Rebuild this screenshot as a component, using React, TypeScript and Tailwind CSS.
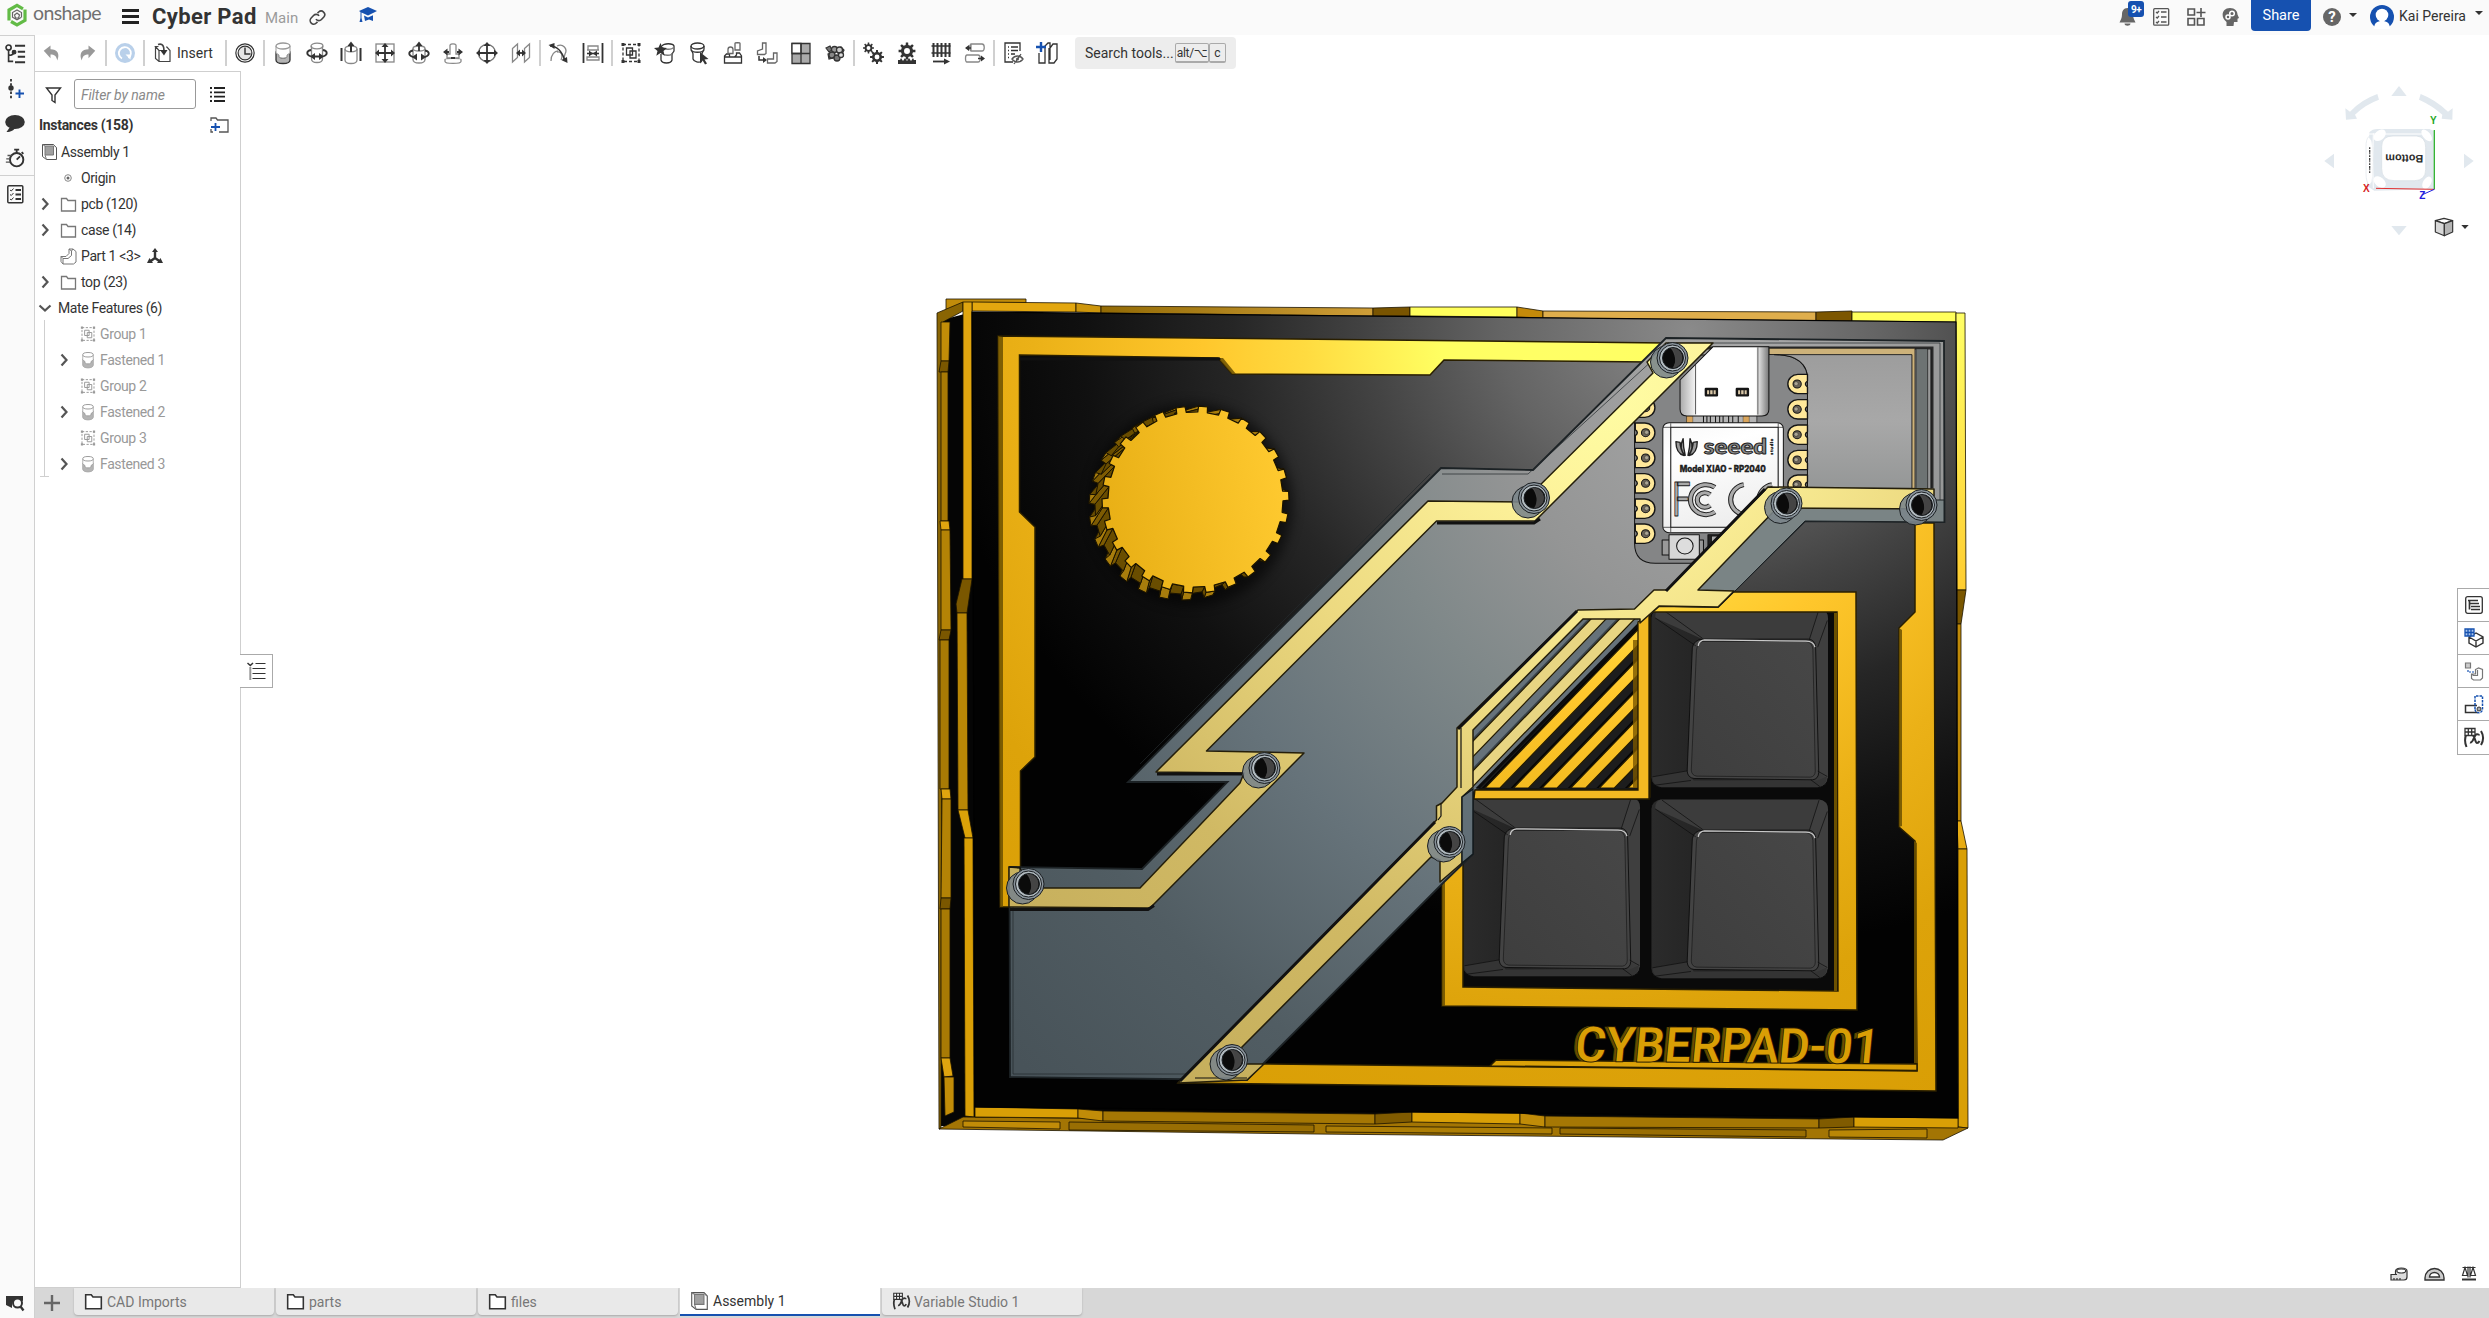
import React from "react";

type Kids = { children?: React.ReactNode };
const DARK = "#333333";
const BLUE = "#1651b0";

function Ico({ children, size = 24, className = "", color = DARK }: Kids & { size?: number; className?: string; color?: string }) {
  return (
    <svg width={size} height={size} viewBox="0 0 24 24" fill="none" stroke={color} strokeWidth={1.3} className={"shrink-0 " + className}>
      {children}
    </svg>
  );
}

/* ---------- toolbar icons ---------- */
const Arrow = ({ d }: { d: string }) => <path d={d} fill={DARK} stroke="none" />;

const FastenedIcon = ({ color = DARK }: { color?: string }) => (
  <Ico color={color}>
    <path d="M5 11v8c0 2 3 3.500 7 3.500s7-1.500 7-3.500v-8l-3.500 1v4c-1 1.500-6 1.500-7 0v-4z" fill="#b4b4b4" />
    <path d="M5 5v7l3 2v2c2 1.500 6 1.500 8 0v-2l3-2V5" fill="#fff" stroke="#999" strokeWidth="1" />
    <ellipse cx="12" cy="5" rx="7" ry="3" fill="#fff" stroke="#999" />
  </Ico>
);
const RevoluteIcon = () => (
  <Ico>
    <path d="M6.500 5v13c0 2 2 3.500 5.500 3.500s5.500-1.500 5.500-3.500V5" stroke="#888" />
    <ellipse cx="12" cy="5" rx="6" ry="2.800" stroke="#888" />
    <path d="M6 9c-5 1-5 5 0 6.500M18 9c5 1 5 5 0 6.500M9 15.500h6" strokeWidth="1.800" />
    <Arrow d="M10 12v7l-5-3.500zM14 12v7l5-3.500z" />
  </Ico>
);
const SliderIcon = () => (
  <Ico>
    <path d="M6 8v11c0 2 2.500 3.500 6 3.500s6-1.500 6-3.500V8" stroke="#888" />
    <ellipse cx="12" cy="8" rx="6" ry="2.800" stroke="#888" />
    <path d="M2.500 7v13M21.500 7v13M12 4v7" strokeWidth="2" />
    <Arrow d="M8.500 5L12 .5 15.500 5z" />
  </Ico>
);
const PlanarIcon = () => (
  <Ico>
    <rect x="3" y="3" width="18" height="18" stroke="#888" />
    <path d="M12 5v14M5 12h14" strokeWidth="1.800" />
    <Arrow d="M12 2l3.500 4h-7zM12 22l3.500-4h-7zM2 12l4-3.500v7zM22 12l-4-3.500v7z" />
  </Ico>
);
const CylindricalIcon = () => (
  <Ico>
    <path d="M6 7.500v11c0 2 2.500 3.500 6 3.500s6-1.500 6-3.500v-11" stroke="#888" />
    <ellipse cx="12" cy="7.500" rx="6" ry="2.500" stroke="#888" />
    <path d="M6 9.500c-5 1-5 5 0 6.500M18 9.500c5 1 5 5 0 6.500M12 4v6" strokeWidth="1.800" />
    <Arrow d="M8.500 5L12 .5 15.500 5zM10 12.500v7l-5-3.500zM14 12.500v7l5-3.500z" />
  </Ico>
);
const PinSlotIcon = () => (
  <Ico>
    <path d="M9 4v9H6v4h12v-4h-3V4c-1-1.500-5-1.500-6 0zM4 18.500c0-1.500 16-1.500 16 0v2c0 2.500-16 2.500-16 0z" stroke="#888" />
    <path d="M5 11h3M16 11h3M10 17h4" strokeWidth="1.800" />
    <Arrow d="M6.500 7.500v7L2 11zM17.500 7.500v7L22 11z" />
  </Ico>
);
const BallIcon = () => (
  <Ico>
    <circle cx="12" cy="12" r="8.500" stroke="#777" />
    <path d="M12 3v18M3 12h18" strokeWidth="1.800" />
    <Arrow d="M12 1l3.500 4h-7zM12 23l3.500-4h-7zM1 12l4-3.500v7zM23 12l-4-3.500v7z" />
  </Ico>
);
const ParallelIcon = () => (
  <Ico>
    <path d="M3.500 7.500L8.500 3v13.500l-5 4.500zM15.500 7.500l5-4.500v13.500l-5 4.500z" stroke="#888" />
    <path d="M8 12h8" strokeWidth="1.800" />
    <Arrow d="M11 8.500v7L7 12zM13 8.500v7l4-3.500z" />
  </Ico>
);
const TangentIcon = () => (
  <Ico>
    <path d="M4 20c0-7 4-10 7-10M10 5c6-3 11 3 8 8l-2 7M10 11c5-1 6 4 4 8" stroke="#888" />
    <path d="M3 5c7 0 12 5 15 15" strokeWidth="1.500" />
    <Arrow d="M1.500 4l6-2v6zM20.500 22l-6-3 5.500-3z" />
  </Ico>
);
const WidthIcon = () => (
  <Ico>
    <path d="M2.500 2v20M21.500 2v20" strokeWidth="1.800" />
    <path d="M7 5h10v4H7zM6 16h12v3H6zM6 9h12" stroke="#888" />
    <path d="M6 12.500h12" strokeWidth="1.600" />
    <Arrow d="M8 9.500v6l4-3zM16 9.500v6l-4-3z" />
  </Ico>
);
const GroupIcon = ({ color = DARK }: { color?: string }) => (
  <Ico color={color}>
    <rect x="4" y="3.500" width="16" height="17" strokeDasharray="3 2" />
    <path d="M2.500 2h3v3h-3zM18.500 2h3v3h-3zM2.500 19h3v3h-3zM18.500 19h3v3h-3z" fill={color} stroke="none" />
    <path d="M7.500 7h6v7h-6zM11 10h6v7h-6z" fill="#fff" fillOpacity=".6" />
  </Ico>
);
const StarCylIcon = () => (
  <Ico>
    <path d="M9 5c2-3 11-3 12 0v5c-1 2-2 2-2 4v5c-1 4-10 4-11 0v-6" />
    <path d="M9 6c2 3 10 3 12 0M9 12c2 3 10 3 10 0" stroke="#777" />
    <path d="M7.500 2l2 4.500 4.500.4-3.500 3.200 1.200 4.600L7.500 12l-4.200 2.700 1.200-4.600L1 6.900l4.500-.4z" fill={DARK} stroke="none" />
  </Ico>
);
const PointerCylIcon = () => (
  <Ico>
    <path d="M4 5v3c0 2 2 3 2 5v5c1 3 6 4 9 2.500M17 5v3c0 2-2 3-2 5" />
    <ellipse cx="10.500" cy="5" rx="6.500" ry="3" />
    <path d="M4 9c2 3 11 3 13 0" />
    <path d="M13 11l8.500 7-4 .6 2.500 4-2 1-2.300-4-2.700 2.800z" fill={DARK} stroke="none" />
  </Ico>
);
const ReplicateIcon = () => (
  <Ico>
    <path d="M3.500 15v7h17v-7l-2-3h-3v2l-2 2h-5v-3h-3zM3.500 16h17" />
    <path d="M14 2.500c0-1 5-1 5 0V9h-5zM7 8.500a2.500 2.500 0 015 0v4H7z" stroke="#666" />
  </Ico>
);
const MirrorIcon = () => (
  <Ico>
    <path d="M7.500 2v6l-5 2v3.500h7l1.500-1V2zM18.500 12v6h-6v4h7.500l2-1.500V12z" stroke="#666" />
    <path d="M4 15v4h6" strokeWidth="1.500" />
    <Arrow d="M8 16l4 3-4 3z" />
  </Ico>
);
const SnapshotIcon = () => (
  <Ico>
    <path d="M3 2.500h18v20H3z" fill="#aaa" />
    <path d="M3 2.500h9v10H3z" fill="#fff" />
    <path d="M12 2.500v20M3 12.500h18" />
  </Ico>
);
const ExplodeIcon = () => (
  <Ico>
    <path d="M3 7l4-2 2 4-3 2zM18 6l3 3-2 4-4-1zM5 13l3-1 2 5-4 1z" fill="#777" strokeWidth="1.200" />
    <circle cx="11.500" cy="8.500" r="3" fill="#999" /><circle cx="16.500" cy="9" r="3" fill="#ccc" /><circle cx="9" cy="14" r="3" fill="#888" /><circle cx="14" cy="17" r="3" fill="#777" /><circle cx="18" cy="14" r="2.500" fill="#ddd" />
  </Ico>
);
const gearPath = (cx: number, cy: number, ro: number, ri: number, n: number) => {
  let d = "";
  for (let i = 0; i < n; i++) {
    const a = (i / n) * Math.PI * 2, s = Math.PI / n;
    [[ri, -0.55], [ro, -0.35], [ro, 0.35], [ri, 0.55]].forEach(([r, k], j) => {
      d += (i === 0 && j === 0 ? "M" : "L") + (cx + r * Math.cos(a + k * s)).toFixed(2) + " " + (cy + r * Math.sin(a + k * s)).toFixed(2);
    });
  }
  return d + "Z";
};
const Gear = ({ x, y, r, hole = "#fff" }: { x: number; y: number; r: number; hole?: string }) => (
  <>
    <path d={gearPath(x, y, r, r * 0.72, 8)} fill={DARK} stroke="none" />
    <circle cx={x} cy={y} r={r * 0.35} fill={hole} stroke="none" />
  </>
);
const GearIcon = () => <Ico><Gear x={7.500} y={7} r={5.500} /><Gear x={16} y={16} r={7} /></Ico>;
const RackIcon = () => (
  <Ico>
    <Gear x={12} y={10} r={8.500} />
    <path d="M3 23v-4l2 0 1-2 2 3 2-3 2 3 2-3 2 3 2-3 1 2h2v4z" fill={DARK} stroke="none" />
  </Ico>
);
const ScrewIcon = () => (
  <Ico>
    <path d="M4.500 2v14M8.500 2v14M12.500 2v14M16.500 2v14M20.500 2v14" strokeWidth="2" />
    <path d="M2.500 5h19M2.500 12h19" />
    <path d="M4 20.500h12" strokeWidth="1.800" /><Arrow d="M15 17.500l6 3-6 3z" />
  </Ico>
);
const LinearIcon = () => (
  <Ico>
    <path d="M8 3h11c3 0 3 7 0 7H8zM4 14h11c3 0 3 7 0 7H4c-2 0-2-7 0-7zM8 3c-2 1-2 6 0 7" stroke="#888" />
    <path d="M3 7h5M15 17.500h5" strokeWidth="1.600" /><Arrow d="M6 4v6L2 7zM18 14.500v6l4-3z" />
  </Ico>
);
const NamedIcon = () => (
  <Ico>
    <path d="M19 10V2H4v19h8M7 6h1M10 6h7M7 9.500h1M10 9.500h7M7 13h1M10 13h4M7 16.500h1" />
    <path d="M11 18c3-4 8-4 11 0-3 4-8 4-11 0zM13 23l7-10" stroke="#555" /><circle cx="16.500" cy="18" r="1.500" fill="#555" stroke="none" />
  </Ico>
);
const FrameIcon = () => (
  <Ico>
    <path d="M10 22V5l3-3h2v17M15 7l3-4h4v15l-3 4h-5V7M4 12v10h6V10" />
    <path d="M6 1v10M1 6h10" stroke={BLUE} strokeWidth="2.400" />
  </Ico>
);

/* ---------- shared tree / tab icons ---------- */
const FolderIcon = ({ color = "#777", size = 17, w = 1.3 }: { color?: string; size?: number; w?: number }) => (
  <svg width={size} height={size} viewBox="0 0 17 17" fill="#fff" stroke={color} strokeWidth={w} className="shrink-0">
    <path d="M1.500 2.500h5l1.500 2h7.500v10.500h-14z" />
  </svg>
);
const AssemblyIcon = ({ size = 17 }: { size?: number }) => (
  <svg width={size} height={size + 1} viewBox="0 0 17 18" fill="none" stroke="#555" strokeWidth="1" className="shrink-0">
    <path d="M1.500 1.500h11l3 3v12h-10l-4-3z" fill="#fff" />
    <path d="M4 3h8.500v9H4z" fill="#a0a0a0" stroke="#777" />
    <path d="M1.500 1.500L4 3M12.500 1.500L15 4.500M4 12l1.500 4.500" stroke="#777" />
  </svg>
);
const VariableIcon = ({ size = 22 }: { size?: number }) => (
  <svg width={size} height={size} viewBox="0 0 22 22" fill="none" stroke={DARK} strokeWidth="1.700" className="shrink-0">
    <path d="M3.500 7c-2 4-2 8 0 13M18 4c3 5 3 9 0 14" strokeWidth="2" />
    <path d="M7 15.500c3 1 4-7 6-8 1.500-.8 3 .2 3 1M9 8c3 0 3 8 5 8 1.500 0 2-1 2.500-2" strokeWidth="2" />
    <path d="M2 1.500h10v7H2zM2 5h10M5.300 1.500v7M8.700 1.500v7" fill="#fff" strokeWidth="1.300" />
  </svg>
);
const Chevron = ({ down = false }: { down?: boolean }) => (
  <svg width="14" height="14" viewBox="0 0 14 14" fill="none" stroke="#555" strokeWidth="2.200" className="shrink-0">
    <path d={down ? "M1.500 4.500L7 9.500l5.500-5" : "M4.500 1.500L9.500 7l-5 5.500"} />
  </svg>
);
const Caret = () => <span className="h-0 w-0 border-x-4 border-t-4 border-x-transparent border-t-[#333]" />;
const Sep = () => <div className="flex w-1 shrink-0 justify-center"><div className="h-[26px] w-[1.500px] bg-[#d0d0d0]" /></div>;
const Cell = ({ children }: Kids) => <div className="flex w-[34px] shrink-0 items-center justify-center">{children}</div>;

/* ---------- header ---------- */
function Header() {
  return (
    <header className="flex h-[35px] shrink-0 items-start bg-[#fafafa] text-[#333]">
      <svg width="22" height="24" viewBox="0 0 22 24" fill="none" className="ml-[5.500px] mt-[3px]">
        <path d="M3 17.500V7L11 2.300l6 3.500M19 6.500v10.800L11 22l-6-3.500" stroke="#62bb46" strokeWidth="3.200" />
        <path d="M15 14.500l-4 2.300-4.500-2.600V9.500L11 7l4.500 2.500v5M8.500 12l2.500-2 2.500 2-1 3h-3z" stroke="#666" strokeWidth="1.200" />
      </svg>
      <span className="ml-[5.500px] mt-[1px] w-[89px] text-[19.500px] leading-[24px] font-normal tracking-[-0.6px] text-[#707070] [font-family:Lato,sans-serif]">onshape</span>
      <div className="mt-[9px] flex w-[17px] flex-col gap-[3px]">
        <i className="h-[3px] bg-[#222]" /><i className="h-[3px] bg-[#222]" /><i className="h-[3px] bg-[#222]" />
      </div>
      <h1 className="ml-[13px] w-[113px] whitespace-nowrap text-[22px] leading-[34px] font-bold tracking-[0.35px]">Cyber Pad</h1>
      <span className="w-[43px] text-[15px] leading-[37px] text-[#9a9a9a]">Main</span>
      <Ico size={19} className="mt-[8px]" color="#444">
        <g strokeWidth="2"><path d="M10 14a4.500 4.500 0 007 .5l3-3.200a4.500 4.500 0 00-6.500-6.200L12 6.500" /><path d="M14 10a4.500 4.500 0 00-7-.5l-3 3.200A4.500 4.500 0 0010.500 19l1.500-1.500" /></g>
      </Ico>
      <svg width="18" height="18" viewBox="0 0 18 18" fill={BLUE} className="ml-[32px] mt-[6px]">
        <path d="M9 1l9 4-9 4.500L2.500 6.500V12l1 4H.5l1-4V6L0 5z" /><path d="M5 9.500l4 2 5-2.300V15l-4-1.500L6 15z" />
      </svg>
      <div className="ml-auto flex items-start">
        <div className="relative mt-[8px] h-[18px] w-[34px]">
          <svg width="17" height="18" viewBox="0 0 17 18" fill="#666"><path d="M8.500 0c-4 0-5.500 3-5.500 6.500S1.500 12 .5 14.500h16c-1-2.500-2.500-4.500-2.500-8S12.500 0 8.500 0zM5.500 15.500h6c0 3-6 3-6 0z" /></svg>
          <span className="absolute -top-[7px] left-[9px] flex h-4 w-4 items-center justify-center rounded-[3px] bg-[#1651b0] text-[10px] font-bold tracking-tighter text-white">9+</span>
        </div>
        <svg width="34" height="18" viewBox="0 0 34 18" fill="none" stroke="#555" strokeWidth="1.300" className="mt-[8px]">
          <rect x=".7" y=".7" width="15" height="16.500" rx="1" /><path d="M8 4h5.500M8 9h5.500M8 14h5.500" strokeWidth="1.600" /><path d="M3 4l1.200 1L6 3M3 9l1.200 1L6 8M3 14l1.200 1L6 13" />
        </svg>
        <svg width="34" height="18" viewBox="0 0 34 18" fill="none" stroke="#555" strokeWidth="1.600" className="mt-[8px]">
          <path d="M1 1h6.500v6H1zM1 10.500h6.500v6.500H1zM10.500 10.500H17v6.500h-6.500zM14 0v9M9.500 4.500h9" />
        </svg>
        <svg width="29" height="18" viewBox="0 0 29 18" className="ml-px mt-[8px]">
          <path d="M8 0c5 0 7.500 3 7.500 6.500L17 10l-1.500.8V14h-3.500l-.5 4H4.500v-4C-2 9 0 0 8 0z" fill="#666" />
          <circle cx="10" cy="5.500" r="2.300" fill="none" stroke="#fff" strokeWidth="1.500" /><circle cx="6" cy="9" r="2" fill="none" stroke="#fff" strokeWidth="1.500" />
        </svg>
        <button className="h-[31px] w-[60px] rounded-b-[4px] bg-[#1651b0] text-[14.500px] text-white">Share</button>
        <div className="ml-[12px] mt-[8px] flex h-[18px] w-[18px] items-center justify-center rounded-full bg-[#666] text-[15px] font-bold text-white">?</div>
        <div className="ml-[8px] mt-[15px]"><Caret /></div>
        <svg width="24" height="24" viewBox="0 0 24 24" className="ml-[13px] mt-[5px]">
          <circle cx="12" cy="12" r="12" fill={BLUE} /><circle cx="12" cy="10" r="6.300" fill="#fff" /><path d="M4 24c0-6 3-8 8-8s8 2 8 8z" fill="#fff" />
        </svg>
        <span className="ml-[5px] w-[76px] whitespace-nowrap text-[14px] leading-[33px]">Kai Pereira</span>
        <div className="mr-[6px] mt-[13px]"><Caret /></div>
      </div>
    </header>
  );
}

/* ---------- toolbar ---------- */
function Toolbar() {
  return (
    <div className="flex h-[36px] shrink-0 items-center bg-white text-[#333]">
      <Cell><Ico size={18} color="#999"><path d="M1 9l9-7v5c9 0 13 6 9 15-1-6-4-8-9-8v5z" fill="#999" stroke="none" /></Ico></Cell>
      <div className="flex w-[35px] justify-center"><Ico size={18}><path d="M23 9l-9-7v5C5 7 1 13 5 22c1-6 4-8 9-8v5z" fill="#999" stroke="none" /></Ico></div>
      <Sep />
      <Cell>
        <svg width="20" height="20" viewBox="0 0 20 20"><circle cx="10" cy="10" r="10" fill="#b9d0ea" /><path d="M7 15.500a6 6 0 116.500-.5" fill="none" stroke="#fff" strokeWidth="1.800" /><path d="M10.500 11.500l5 0v5z" fill="#fff" /></svg>
      </Cell>
      <Sep />
      <div className="flex w-[78px] items-center pl-[8px]">
        <svg width="18" height="20" viewBox="0 0 18 20" fill="none" stroke="#444" strokeWidth="1.200"><path d="M1.500 3.500v12l3.500 3h11v-11l-3-3.500h-1M5 18.500V7.500L1.500 3.500h3M5 7.500h2" /><path d="M4 1.500c5-1.500 6 2 6 6" strokeWidth="1.700" /><path d="M6 7h7.500L10 12.500z" fill={DARK} stroke="none" /></svg>
        <span className="ml-[5px] text-[14px]">Insert</span>
      </div>
      <Sep />
      <Cell><Ico size={22} color="#333"><circle cx="12" cy="12" r="10" /><circle cx="12" cy="12" r="7.500" fill="#e6e6e6" /><path d="M12 6v7h6" strokeWidth="1.600" /></Ico></Cell>
      <Sep />
      <Cell><FastenedIcon /></Cell><Cell><RevoluteIcon /></Cell><Cell><SliderIcon /></Cell><Cell><PlanarIcon /></Cell>
      <Cell><CylindricalIcon /></Cell><Cell><PinSlotIcon /></Cell><Cell><BallIcon /></Cell><Cell><ParallelIcon /></Cell>
      <Sep />
      <Cell><TangentIcon /></Cell><Cell><WidthIcon /></Cell>
      <Sep />
      <Cell><GroupIcon /></Cell><Cell><StarCylIcon /></Cell><Cell><PointerCylIcon /></Cell><Cell><ReplicateIcon /></Cell>
      <Cell><MirrorIcon /></Cell><Cell><SnapshotIcon /></Cell><Cell><ExplodeIcon /></Cell>
      <Sep />
      <Cell><GearIcon /></Cell><Cell><RackIcon /></Cell><Cell><ScrewIcon /></Cell><Cell><LinearIcon /></Cell>
      <Sep />
      <Cell><NamedIcon /></Cell><Cell><FrameIcon /></Cell>
      <div className="ml-[11px] flex h-8 w-[161px] items-center rounded-[4px] bg-[#ededed] pl-[10px] text-[14px]">
        <span className="w-[90px] shrink-0 whitespace-nowrap">Search tools...</span>
        <kbd className="flex h-5 w-[34px] shrink-0 items-center justify-center overflow-hidden whitespace-nowrap rounded-[2px] border border-b-2 border-[#aaa] text-[12px] tracking-[-0.3px] [font-family:Roboto,'DejaVu_Sans',sans-serif]">alt/⌥</kbd>
        <kbd className="flex h-5 w-[17px] shrink-0 items-center justify-center rounded-[2px] border border-b-2 border-[#aaa] text-[12px] [font-family:Roboto,sans-serif]">c</kbd>
      </div>
    </div>
  );
}

/* ---------- left rail ---------- */
function Rail() {
  return (
    <aside className="flex w-[35px] shrink-0 flex-col border-r border-t border-[#d0d0d0] bg-[#fafafa]">
      <div className="flex h-[35px] items-center justify-center pr-[5px]">
        <Ico size={22}><circle cx="5" cy="5" r="2.800" strokeWidth="1.800" /><path d="M5 8v12h5M5 12c0 2 5 2 6-2" strokeWidth="1.800" /><circle cx="11" cy="10" r="2" fill={DARK} /><path d="M12 3h11M15 9.500h8M15 15h8M12 21h11" strokeWidth="2.200" /></Ico>
      </div>
      <div className="flex h-[35px] items-center justify-center pr-[4px]">
        <svg width="20" height="20" viewBox="0 0 20 20" fill="none" stroke={DARK}><path d="M6 0v20" strokeWidth="1.800" strokeDasharray="2.500 1.700" /><circle cx="6" cy="9" r="2.700" fill={DARK} stroke="none" /><path d="M14.500 10.500v8.500M10.500 14.500h8.500" stroke={BLUE} strokeWidth="1.900" /></svg>
      </div>
      <div className="flex h-[35px] items-center justify-center pr-[4px]">
        <svg width="20" height="18" viewBox="0 0 20 18" fill={DARK}><ellipse cx="10" cy="7" rx="9.800" ry="7" /><path d="M5 12l-3.500 5C6 17 9 15 10 13z" /></svg>
      </div>
      <div className="flex h-[35px] items-center justify-center border-b border-[#d0d0d0] pr-[4px]">
        <Ico size={20}><circle cx="14" cy="14" r="8" strokeWidth="2.300" /><path d="M11 2h6M14 3v3M20 5l2 2M14 14l4-4" strokeWidth="2.200" /><path d="M3 9h5M1.500 13h5M1 17h5" strokeWidth="1.600" stroke="#555" /></Ico>
      </div>
      <div className="flex h-[36px] items-center justify-center pr-[4px]">
        <svg width="17" height="19" viewBox="0 0 17 19" fill="none" stroke={DARK} strokeWidth="1.500"><rect x=".8" y=".8" width="15" height="17" rx="1" /><path d="M8.500 5H14M8.500 9.500H14M8.500 14H14" strokeWidth="1.800" /><path d="M3 5l1.300 1L6.500 3.500M3 9.500l1.300 1L6.500 8M3 14l1.300 1 2.200-2.500" strokeWidth="1" /></svg>
      </div>
      <div className="mt-auto flex h-[29px] items-center justify-center pr-[3px]">
        <svg width="19" height="17" viewBox="0 0 19 17"><path d="M0 1h17v5l-6-2-5 4v5L0 10z" fill={DARK} /><circle cx="11.500" cy="8" r="4.500" fill="#fafafa" stroke={DARK} strokeWidth="2" /><path d="M14.500 11.500l3 4" stroke={DARK} strokeWidth="2.300" /></svg>
      </div>
    </aside>
  );
}

/* ---------- instance tree ---------- */
const Row = ({ children, className = "" }: Kids & { className?: string }) => (
  <div className={"flex h-[26px] items-center whitespace-nowrap " + className}>{children}</div>
);
const FolderRow = ({ label }: { label: string }) => (
  <Row className="pl-[3px]"><Chevron /><span className="ml-[8px] mr-[4px] flex"><FolderIcon /></span>{label}</Row>
);
const features = ["Group 1", "Fastened 1", "Group 2", "Fastened 2", "Group 3", "Fastened 3"];

function Tree() {
  return (
    <section className="flex w-[206px] shrink-0 flex-col border-b border-r border-t border-[#cfcfcf] bg-white text-[14px] tracking-[-0.38px] text-[#333]">
      <div className="mt-[7px] flex h-[30px] items-center">
        <svg width="17" height="17" viewBox="0 0 17 17" fill="none" stroke={DARK} strokeWidth="1.400" className="ml-[10px] mt-[2px]"><path d="M1.500 1h14l-5.500 7v7.500l-3-2V8z" /></svg>
        <input className="ml-[12px] h-[30px] w-[122px] rounded-[3px] border border-[#999] bg-white pl-[6px] pt-[2px] text-[14px] italic tracking-[-0.1px] outline-none placeholder:text-[#8a8a8a]" placeholder="Filter by name" />
        <svg width="15" height="15" viewBox="0 0 15 15" stroke="#222" strokeWidth="1.800" className="ml-[14px]"><path d="M0 1h2M4 1h11M0 5.300h2M4 5.300h11M0 9.600h2M4 9.600h11M0 14h2M4 14h11" /></svg>
      </div>
      <div className="mt-[3px] flex h-[26px] items-center pl-[4px] font-bold">
        <span className="w-[171px] pt-px text-[14px] tracking-[-0.3px]">Instances (158)</span>
        <svg width="19" height="16" viewBox="0 0 19 16" fill="none" stroke="#555" strokeWidth="1.300"><path d="M1 4V1h5l1.500 2H18v12H9M1 12v3h2" /><path d="M5.500 6v8M1 10h9" stroke={BLUE} strokeWidth="1.800" /></svg>
      </div>
      <div className="mt-px">
        <Row className="pl-[6px]"><AssemblyIcon /><span className="ml-[3px]">Assembly 1</span></Row>
        <Row className="pl-[29px]">
          <svg width="8" height="8" viewBox="0 0 8 8" className="mr-[9px]"><circle cx="4" cy="4" r="3.300" fill="none" stroke="#888" /><circle cx="4" cy="4" r="1.500" fill="#666" /></svg>Origin
        </Row>
        <FolderRow label="pcb (120)" />
        <FolderRow label="case (14)" />
        <Row className="pl-[25px]">
          <svg width="17" height="17" viewBox="0 0 17 17" fill="#fff" stroke="#777" strokeWidth="1" className="mr-[4px]"><path d="M1 8.500h5l3-3V1h4l3 2.500V14l-2.500 2H3l-2-2.500zM1 8.500l2 2h5l3.500-3V3L9 1M3 10.500V16M11.500 3L13 1" /></svg>
          Part 1 &lt;3&gt;
          <svg width="16" height="16" viewBox="0 0 16 16" className="ml-[7px]"><path d="M8 3v7M8 10l-5 3.500M8 10l5 3.500" stroke={DARK} strokeWidth="2.400" /><path d="M8 0l3 4H5zM0 15l2.500-5L6 15zM16 15l-2.500-5L10 15z" fill={DARK} /></svg>
        </Row>
        <FolderRow label="top (23)" />
        <Row className="pl-[3px]"><Chevron down /><span className="ml-[6px]">Mate Features (6)</span></Row>
        <div className="relative text-[#999]">
          <div className="absolute -top-px bottom-0 left-[9px] w-px bg-[#cfcfcf]" />
          <div className="absolute bottom-0 left-[5px] h-px w-[9px] bg-[#cfcfcf]" />
          {features.map((f) => (
            <Row key={f} className="pl-[22px]">
              {f[0] === "G" ? <span className="w-[14px]" /> : <Chevron />}
              <span className="ml-[8px] mr-[4px] flex h-[17px] w-[17px] items-center justify-center [&_svg]:h-[18px] [&_svg]:w-[18px]">
                {f[0] === "G" ? <GroupIcon color="#999" /> : <FastenedIcon color="#aaa" />}
              </span>
              {f}
            </Row>
          ))}
        </div>
      </div>
    </section>
  );
}

/* ---------- 3D model ---------- */
const screws = [[1672.5, 358], [1534, 498], [1786.5, 503.5], [1921.5, 505], [1264.500, 768], [1028.5, 884], [1232, 1060], [1449.500, 842]];

function Screw({ x, y }: { x: number; y: number }) {
  return (
    <g stroke="#1b1f22" strokeWidth="1">
      <circle cx={x - 6} cy={y + 4} r="16" fill="#7b858b" fillOpacity=".9" />
      <circle cx={x} cy={y} r="15.500" fill="#88929a" />
      <circle cx={x} cy={y} r="13" fill="#b2bbc0" />
      <circle cx={x + 0.5} cy={y} r="10.500" fill="#0b0b0b" />
      <path d={`M${x - 2} ${y - 10}a10 10 0 013 20c3-6 2-14-3-20z`} fill="#4a4a4a" stroke="none" />
      <path d={`M${x} ${y - 10}a10 10 0 010 20c4-6 4-14 0-20z`} fill="#444" stroke="none" />
    </g>
  );
}

/* keycap, drawn in its own local units */
function Key({ x, y }: { x: number; y: number }) {
  return (
    <g transform={`translate(${x} ${y}) scale(.3444 .3333)`} stroke="#0a0a0a" strokeWidth="2.500">
      <rect x="0" y="0" width="514" height="536" rx="28" fill="url(#keySide)" />
      <path d="M28 0h460l-25 92H150L12 28Q12 4 28 0z" fill="#3c3c3c" stroke="none" />
      <path d="M488 0q26 4 26 30v480l-30-18-12-375-10-25z" fill="#3f3f3f" stroke="none" />
      <path d="M4 505L106 486l18 30h360l26-12q0 30-26 32H30Q6 534 4 505z" fill="#343434" stroke="none" />
      <path d="M150 92h308q18 2 20 24l9 376q-1 20-18 22l-344-4q-18-2-20-22l15-370q4-24 30-26z" fill="#434343" />
      <path d="M150 99h300q18 2 20 24l7 366q-1 15-14 17l-330-3q-15-2-16-18l15-360q3-24 18-26z" fill="url(#keyTop)" strokeWidth="1.500" />
      <path d="M137 112q2-16 18-18l295 4q22 0 26 18" fill="none" stroke="#c9c9c9" strokeWidth="4" />
      <path d="M12 28l118 84M32 2l118 88M488 2l-28 90M512 36l-28 80M4 505l102-18M12 530l104-14M512 504l-28-16M490 534l-26-20" fill="none" strokeWidth="2" />
    </g>
  );
}

function Knob() {
  const N = 26, cx = 1195.500, cy = 499.500, r = 93.500, ri = 87.500, dx = -13, dy = 7;
  const front: number[][] = [], back: number[][] = [];
  for (let i = 0; i < N; i++) {
    const a = (i / N) * 2 * Math.PI - 0.04;
    for (const [rr, k] of [[ri, -0.055], [r, -0.048], [r, 0.048], [ri, 0.055]]) {
      front.push([cx + rr * Math.cos(a + k), cy + rr * Math.sin(a + k)]);
      back.push([cx + dx + rr * Math.cos(a + k - 0.12), cy + dy + rr * Math.sin(a + k - 0.12)]);
    }
  }
  const str = (p: number[][]) => p.map((q) => q[0].toFixed(1) + "," + q[1].toFixed(1)).join(" ");
  const n = front.length;
  return (
    <g strokeLinejoin="round">
      <circle cx={cx - 4} cy={cy + 5} r="101" fill="#000" opacity=".55" filter="url(#soft)" />
      <polygon points={str(back)} fill="#5f4600" stroke="#1a1300" strokeWidth="1.200" />
      {front.map((p, i) => {
        const j = (i + 1) % n;
        return <polygon key={i} points={str([p, front[j], back[j], back[i]])} fill={i % 4 === 1 ? "#a87d0c" : i % 4 === 0 ? "#7d5b02" : "#694d00"} stroke="#1a1300" strokeWidth="1" />;
      })}
      <polygon points={str(front)} fill="url(#knob)" stroke="#1a1300" strokeWidth="1.200" />
    </g>
  );
}

const Pad = ({ x, y, flip = false }: { x: number; y: number; flip?: boolean }) => (
  <g transform={`translate(${x} ${y}) scale(${flip ? -1 : 1} 1)`}>
    <path d="M0-29h28a29 29 0 010 58H0v-20q12-9 0-18z" fill="#ffe89a" strokeWidth="4" />
    <circle cx="30" cy="0" r="12" fill="#6a6358" /><circle cx="33" cy="-1" r="6" fill="#aaa494" strokeWidth="1" />
  </g>
);

function Board() {
  return (
    <g clipPath="url(#boardClip)">
    <g transform="translate(1440 280) scale(.3444 .3333)" stroke="#151515" strokeWidth="3" strokeLinejoin="round">
      <path d="M565 380V790q0 60 60 60H1067V290q-4-64-65-65H680L565 380z" fill="#848586" />
      <path d="M955 205h424v420h-9V224H955z" fill="#cdb27a" strokeWidth="2" />
      <path d="M1370 224H955q112 0 112 70V625h303z" fill="url(#panelGrey)" strokeWidth="2" />
      <path d="M955 225h20q92 4 92 75v325H955z" fill="#868788" stroke="none" />
      <path d="M970 224q97 0 97 75v325" fill="none" />
      <path d="M1382 206h34v420h-34zM1426 206v420" fill="#6d7373" strokeWidth="2" />
      {[312, 388, 464, 540, 614].map((y) => <Pad key={y} x={1067} y={y} flip />)}
      {[383, 458, 534, 610, 686, 761].map((y) => <Pad key={y} x={567} y={y} />)}
      <path d="M716 400h204v32H716z" fill="#b4b4b4" strokeWidth="2" />
      <path d="M716 405h18v25h-18zM880 405h18v25h-18z" fill="#d9a55c" strokeWidth="1" />
      <path d="M765 405v25M775 405v25M785 405v25M800 405v25M812 405v25M822 405v25M838 405v25M850 405v25M866 405v25" />
      <path d="M697 300v88q0 20 20 20h218q20 0 20-20V200H793z" fill="url(#usb)" />
      <path d="M742 255v148M923 202v202" strokeWidth="2" />
      <path d="M772 327h32v19h-32zM862 327h32v19h-32z" fill="#d9c7a8" strokeWidth="7" />
      <path d="M783 330v14M793 330v14M873 330v14M883 330v14" strokeWidth="3" />
      <rect x="647" y="428" width="350" height="330" rx="18" fill="url(#shield)" />
      <path d="M670 442h312v300H670zM670 430v326M982 430v326M648 442h348M648 742h348" fill="none" strokeWidth="2" />
      <g fill="#999" stroke="#222" strokeWidth="4"><path d="M685 485q0 35 24 42-12-22-12-40zM747 485q0 35-24 42 12-22 12-40zM706 476q-14 30 6 50-6-25-6-50zM726 476q14 30-6 50 6-25 6-50z" /></g>
      <text x="766" y="522" fontFamily="Lato, sans-serif" fontWeight="900" fontSize="64" textLength="184" lengthAdjust="spacingAndGlyphs" fill="#8d8d8d" stroke="#222" strokeWidth="3">seeed</text>
      <text transform="translate(966 524) rotate(-90)" fontFamily="Lato, sans-serif" fontWeight="900" fontSize="13" textLength="48" fill="#222" strokeWidth="1">studio</text>
      <text x="696" y="575" fontFamily="Inter, sans-serif" fontWeight="800" fontSize="26" textLength="250" lengthAdjust="spacingAndGlyphs" fill="#222" strokeWidth="1">Model XIAO - RP2040</text>
      <g fill="none">
        <path d="M798 622a45 45 0 10 0 74M784 644a22 22 0 10 0 32M882 614a48 46 0 00 0 90M964 614a48 46 0 00 0 90" stroke="#222" strokeWidth="15" />
        <path d="M798 622a45 45 0 10 0 74M784 644a22 22 0 10 0 32M882 614a48 46 0 00 0 90M964 614a48 46 0 00 0 90" stroke="#aaa" strokeWidth="9" />
      </g>
      <text x="674" y="708" fontFamily="Roboto, sans-serif" fontWeight="400" fontSize="144" textLength="54" lengthAdjust="spacingAndGlyphs" fill="#aaa" stroke="#222" strokeWidth="3">F</text>
      <path d="M645 780h120v45H645z" fill="#999" /><path d="M665 764h88v74h-88z" fill="#d6d6d6" /><circle cx="711" cy="798" r="24" fill="#ddd" />
      <path d="M778 764h50v40h-50z" fill="#222" /><path d="M788 768h24v26h-24z" fill="#aaa" />
    </g>
    </g>
  );
}

type SegProps = { p: string; f: string };
const Seg = ({ p, f }: SegProps) => <polygon points={p} fill={f} stroke="#1a1300" strokeWidth=".8" />;

const caseSegments: SegProps[] = [
  { p: "946,299 1026,299 1026,303 972,303 946,310", f: "#c18c0a" },
  { p: "972,302 1076,303 1076,312 972,311", f: "#e3a70f" },
  { p: "1076,303 1101,306 1101,313 1076,312", f: "#cd960c" },
  { p: "1101,306 1373,308 1373,316 1101,313", f: "url(#topDark)" },
  { p: "1373,308 1410,307 1410,316 1373,316", f: "#795400" },
  { p: "1410,307 1517,307 1517,317 1410,316", f: "#ffff5c" },
  { p: "1517,307 1543,311 1543,318 1517,317", f: "#c48a0a" },
  { p: "1543,311 1816,312 1816,321 1543,318", f: "#dfae4c" },
  { p: "1816,312 1852,311 1852,321 1816,321", f: "#7c5600" },
  { p: "1852,312 1956,312 1956,322 1852,321", f: "#ffff5c" },
  { p: "1956,313 1965,313 1966,590 1957,590", f: "url(#rightTop)" },
  { p: "1957,590 1966,590 1961,624 1957,624", f: "#795600" },
  { p: "1957,624 1961,624 1961,821 1957,821", f: "#c08a08" },
  { p: "1957,821 1961,821 1967,849 1958,849", f: "#e8ac12" },
  { p: "1958,849 1967,849 1968,1128 1958,1127", f: "#d99f06" },
  { p: "937,313 963,302 963,311 943,322 941,1128 939,1129", f: "#8a6503" },
  { p: "941,322 950,322 949,361 941,361", f: "#c28d08" },
  { p: "941,361 949,361 948,372 939,372", f: "#7a5700" },
  { p: "941,372 948,372 948,521 941,521", f: "#a87a05" },
  { p: "940,521 949,521 950,530 941,530", f: "#e0a50f" },
  { p: "941,530 950,530 951,630 941,630", f: "#b48306" },
  { p: "941,630 951,630 949,640 939,640", f: "#7a5700" },
  { p: "940,640 949,640 949,789 940,789", f: "#a87a05" },
  { p: "941,789 950,789 951,799 942,799", f: "#e0a50f" },
  { p: "942,799 951,799 951,898 941,898", f: "#b48306" },
  { p: "941,898 951,898 950,909 940,909", f: "#7a5700" },
  { p: "941,909 950,909 950,1058 941,1058", f: "#a87a05" },
  { p: "941,1058 950,1058 953,1076 944,1077", f: "#e0a50f" },
  { p: "944,1077 954,1077 954,1112 945,1116", f: "#c28d08" },
  { p: "963,302 972,302 972,579 963,579", f: "#e0a50f" },
  { p: "962,579 972,579 967,613 957,613 956,604", f: "#7a5700" },
  { p: "957,613 967,613 968,810 958,810", f: "#b98706" },
  { p: "958,810 968,810 973,838 965,838", f: "#dca208" },
  { p: "964,838 973,838 974,1117 965,1116", f: "#d99f06" },
  { p: "939,1129 963,1117 1958,1127 1968,1128 1943,1140 1314,1134", f: "#a37504" },
  { p: "975,1107 1078,1109 1078,1118 975,1117", f: "#d99f06" },
  { p: "1078,1109 1103,1111 1103,1121 1078,1118", f: "#c18c08" },
  { p: "1103,1111 1375,1114 1375,1124 1103,1121", f: "#a57704" },
  { p: "1375,1114 1412,1112 1412,1122 1375,1124", f: "#805b00" },
  { p: "1412,1112 1520,1113 1520,1124 1412,1122", f: "#d99f06" },
  { p: "1520,1113 1545,1116 1545,1127 1520,1124", f: "#c18c08" },
  { p: "1545,1116 1819,1119 1819,1128 1545,1127", f: "#a57704" },
  { p: "1819,1119 1854,1117 1854,1127 1819,1128", f: "#805b00" },
  { p: "1854,1117 1958,1118 1958,1128 1854,1127", f: "#d99f06" },
  { p: "963,1121 1060,1122 1060,1129 963,1127", f: "#c18c08" },
  { p: "1069,1122 1314,1125 1314,1132 1069,1130", f: "#996e03" },
  { p: "1326,1126 1552,1128 1552,1134 1326,1132", f: "#ad7e05" },
  { p: "1560,1128 1806,1130 1806,1137 1560,1134", f: "#996e03" },
  { p: "1829,1130 1927,1129 1927,1138 1829,1137", f: "#b98706" },
];

const COVER = "1666,338 1944,341 1944.5,522 1805,521 1718,607 1659,606 1640,623 1473,793 1473,854 1442,884 1247,1080 1010,1077 1009.5,867 1142,869 1227.5,782 1128,782 1209,700 1441,468 1533,470";
const TRACE1 = "1666,343 1713,343 1535,521 1436.500,521 1206.500,751 1304,753 1150,908 1009,907 1009,867 1020,868 1030,888 1140,888 1240,783 1244,773 1156,772 1428,501 1523,502 1653,373 1647,362";

function Model() {
  const stripes = Array.from({ length: 12 }, (_, i) => 1485 + (i - 6) * 28.6);
  return (
    <svg className="absolute inset-0 h-full w-full" viewBox="241 71 2248 1217" preserveAspectRatio="none">
      <defs>
        <radialGradient id="face" gradientUnits="userSpaceOnUse" cx="0" cy="0" r="1" gradientTransform="translate(1690 330) scale(760 620)">
          <stop offset="0" stopColor="#8a8a8a" /><stop offset=".25" stopColor="#646464" /><stop offset=".42" stopColor="#444" />
          <stop offset=".6" stopColor="#262626" /><stop offset=".8" stopColor="#101010" /><stop offset="1" stopColor="#020202" />
        </radialGradient>
        <radialGradient id="cover" gradientUnits="userSpaceOnUse" cx="1750" cy="380" r="1000">
          <stop offset="0" stopColor="#a9a9a9" /><stop offset=".25" stopColor="#949595" /><stop offset=".4" stopColor="#7f8889" />
          <stop offset=".6" stopColor="#66737a" /><stop offset=".8" stopColor="#515d63" /><stop offset="1" stopColor="#485359" />
        </radialGradient>
        <radialGradient id="gold" gradientUnits="userSpaceOnUse" cx="1560" cy="340" r="850">
          <stop offset="0" stopColor="#ffff66" /><stop offset=".14" stopColor="#ffff62" /><stop offset=".3" stopColor="#ffdb40" />
          <stop offset=".42" stopColor="#ffc72c" /><stop offset=".62" stopColor="#ebb117" /><stop offset=".8" stopColor="#dda30a" /><stop offset="1" stopColor="#d99e05" />
        </radialGradient>
        <radialGradient id="trace" gradientUnits="userSpaceOnUse" cx="1600" cy="380" r="850">
          <stop offset="0" stopColor="#fffea4" /><stop offset=".16" stopColor="#fdf29a" /><stop offset=".42" stopColor="#ecd980" />
          <stop offset=".7" stopColor="#d0b964" /><stop offset="1" stopColor="#c4ad5b" />
        </radialGradient>
        <linearGradient id="topDark"><stop offset="0" stopColor="#936b05" /><stop offset="1" stopColor="#cf9e38" /></linearGradient>
        <linearGradient id="rightTop" x1="0" y1="0" x2="0" y2="1"><stop offset="0" stopColor="#ffff66" /><stop offset="1" stopColor="#ffcd30" /></linearGradient>
        <linearGradient id="knob" x1="0" y1=".6" x2="1" y2=".4"><stop offset="0" stopColor="#e8af15" /><stop offset="1" stopColor="#ffca30" /></linearGradient>
        <linearGradient id="keySide"><stop offset="0" stopColor="#2b2b2b" /><stop offset=".3" stopColor="#242424" /><stop offset="1" stopColor="#3c3c3c" /></linearGradient>
        <linearGradient id="keyTop" x1="0" y1="1" x2="1" y2="0"><stop offset="0" stopColor="#3e3e3e" /><stop offset="1" stopColor="#474747" /></linearGradient>
        <linearGradient id="usb"><stop offset="0" stopColor="#aaa" /><stop offset=".2" stopColor="#fff" /><stop offset=".85" stopColor="#fff" /><stop offset="1" stopColor="#777" /></linearGradient>
        <linearGradient id="shield" x1="0" y1="0" x2=".3" y2="1"><stop offset="0" stopColor="#f8f8f8" /><stop offset=".3" stopColor="#fff" /><stop offset="1" stopColor="#eee" /></linearGradient>
        <linearGradient id="panelGrey" x1="0" y1="0" x2="0" y2="1"><stop offset="0" stopColor="#9d9d9d" /><stop offset=".5" stopColor="#a8a8a8" /><stop offset="1" stopColor="#959797" /></linearGradient>
        <filter id="soft" x="-20%" y="-20%" width="140%" height="140%"><feGaussianBlur stdDeviation="6" /></filter>
        <clipPath id="box"><polygon points="1473,730 1583,619 1638,619 1638,788 1473,788" /></clipPath>
        <clipPath id="boardClip"><polygon points="1600,340 1945,340 1945,500 1775,500 1690,590 1660,600 1600,600" /></clipPath>
      </defs>

      {/* case */}
      <polygon points="938,321 972,312 1956,322 1957,1125 1943,1134 940,1126" fill="#050505" />
      {caseSegments.map((s, i) => <Seg key={i} {...s} />)}
      <polygon points="972,312 1956,322 1958,1118 975,1107" fill="url(#face)" stroke="#000" strokeWidth="1.200" />

      {/* key well */}
      <path d="M1649 606L1840 606 1840 995 1460 991 1460 794 1649 796z" fill="#0a0a0a" />
      <Key x={1651} y={608.500} />
      <Key x={1463} y={797.500} />
      <Key x={1651} y={799.500} />

      {/* face frame */}
      <g fill="url(#gold)" stroke="#2a1f00" strokeWidth="1.500">
        <polygon points="998,336 1666,343 1650,362 1444,360 1430,375 1232,374 1218,358 1019.500,355 1019.500,512 1035,527 1035,757 1020.500,771 1020.500,907 1000,907" />
        <polygon points="1915,523 1934,523 1936,1091 1178,1083 1194,1066 1264,1064 1917,1071 1915,841 1899,827 1899,628 1915,612" />
        <polygon points="1490,1066 1496,1060 1917,1064 1917,1070.500" />
        <path fillRule="evenodd" d="M1650 592L1856 592 1857 1010 1442 1006 1442 797 1650 797zM1649 612L1649 799 1463 797 1463 987 1838 991 1837 612z" />
      </g>
      <path d="M998 336l5 1v570h-3zM1218 358l14 16h4l-13-16zM1899 628l3 2v196l-3 1zM1914 841l3 2v220h-3zM1442 884l3-2v124h-3z" fill="#6b5000" opacity=".85" />
      <path d="M1834 613h3v378h-3z" fill="#6b5000" />

      <Knob />

      {/* translucent cover */}
      <polygon points={COVER} fill="url(#cover)" stroke="#1c2225" strokeWidth="1.800" />
      <path d="M1668 343h272v178M1013 870v204h236M1430 474l-290 290M1666 348L1528 474h-86" fill="none" stroke="#23292c" strokeWidth="1" opacity=".7" />
      <path d="M1706 348h226v140" fill="none" stroke="#2a2a2a" strokeWidth="3" />

      <Board />
      <polygon points="1780,500 1944,500 1944,522 1805,521 1722,604 1690,590" fill="#7a8485" stroke="#1c2225" strokeWidth="1" />

      {/* striped vent */}
      <g clipPath="url(#box)">
        <rect x="1470" y="615" width="172" height="176" fill="#1d1d1d" />
        <polygon points="1470,615 1648,615 1476,791 1470,791" fill="#66727a" />
        {stripes.map((x, i) => (
          <g key={x}>
            <polygon points={`${x - 3},788 ${x},788 ${x + 170},612 ${x + 167},612`} fill={i < 6 ? "#38424a" : "#050505"} />
            <polygon points={`${x},788 ${x + 15},788 ${x + 185},612 ${x + 170},612`} fill={i < 6 ? "#e8d582" : "url(#gold)"} stroke="#241b00" strokeWidth="1.200" />
          </g>
        ))}
        <path d="M1640 623L1476 790" stroke="#0b0b0b" strokeWidth="3" />
        <path d="M1633 640h5v150h-5z" fill="#7a5700" opacity=".8" />
      </g>
      <path d="M1638 622l11-8v185h-175l1-9h163z" fill="#f3b922" stroke="#241b00" strokeWidth="1.300" />

      {/* gold traces */}
      <g fill="url(#trace)" stroke="#241e0a" strokeWidth="1.500" strokeLinejoin="round">
        <polygon points={TRACE1} />
        <path d="M1768 487L1934 489 1934 509 1777 508 1698 590 1734 591 1718 607 1659 606 1640 623 1640 619 1583 619 1473 730 1473 787 1462 797 1462 863 1440 882 1440 860 1431 857 1242 1047 1232 1064 1264 1064 1247 1080 1178 1083 1436.500 820 1436.500 806 1442 803 1457 787 1457 728 1578 610 1634.500 609 1654 590 1667 590z" />
      </g>
      <g fill="none" stroke="#111" strokeLinejoin="round">
        <path d="M1010 909.500h138l6-4M1437 523h97l6-4M1157 774h85M1218 358l1 1h-199" strokeWidth="3" />
        <path d="M1765 489L1666 591M1577 611L1458 729M1435 822L1180 1081" strokeWidth="3" />
        <path d="M1461 728v60M1441 804v12l-3 4" strokeWidth="1.200" />
        <path d="M1010 867h10v21M1195 1078h52" strokeWidth="1.200" />
      </g>
      <path d="M1462 797l11-8v65l-11 9z" fill="#5c6b74" fillOpacity=".7" stroke="#11181c" strokeWidth="1.200" />
      {screws.map(([x, y]) => <Screw key={x} x={x} y={y} />)}

      {/* engraved label */}
      <g transform="translate(1574 1061) rotate(.4) skewX(-5)" fontFamily="Roboto, sans-serif" fontWeight="500" fontSize="48">
        <text x="-3" y="0" textLength="304" lengthAdjust="spacingAndGlyphs" fill="#6b5000" stroke="#5a4300" strokeWidth="1">CYBERPAD-01</text>
        <text x="0" y="0" textLength="304" lengthAdjust="spacingAndGlyphs" fill="#d99e05" stroke="#2b1f00" strokeWidth="1.800" paintOrder="stroke" aria-hidden="true">CYBERPAD-01</text>
      </g>
    </svg>
  );
}

/* ---------- view cube ---------- */
function ViewCube() {
  return (
    <svg className="absolute right-0 top-0" width="189" height="189" viewBox="600 213 567 567" fill="#e1e8ee">
      <path d="M897 258l23 30h-46zM897 706l23-28h-46zM673 483l29-22v44zM1121 483l-29-22v44z" />
      <path d="M736 325l14 10q34-36 82-53l5 17q-40 14-72 45l6 12-33 3zM1058 325l-14 10q-38-36-82-53l-5 17q40 18 70 45l-2 12 32 3z" />
      <path d="M808 397q10-12 30-10h150l15 6v175l-180 4-22-14z" />
      <path d="M806 410q12 10 12 30v90q0 18-10 26-10-10-10-36v-80q0-22 8-30z" fill="#fff" stroke="#dfe6ec" strokeWidth="2" />
      <path d="M805 402h170M820 400q-4 80 0 165" stroke="#fff" strokeWidth="3" fill="none" />
      <path d="M845 440q0-32 34-32h70q28 2 28 34v66q0 34-34 34h-60q-38 0-38-36z" fill="#fff" stroke="#d4dce3" strokeWidth="2" />
      <g fill="#fff"><ellipse cx="839" cy="406" rx="21" ry="14" transform="rotate(-40 839 406)" /><ellipse cx="839" cy="546" rx="21" ry="14" transform="rotate(40 839 546)" /><ellipse cx="980" cy="406" rx="21" ry="11" transform="rotate(50 980 406)" /><ellipse cx="981" cy="548" rx="20" ry="12" transform="rotate(-60 981 548)" /></g>
      <text transform="translate(970 465) rotate(181)" fontFamily="Liberation Sans, sans-serif" fontSize="33" fontWeight="700" textLength="114" lengthAdjust="spacingAndGlyphs" fill="#2b2b2b">Bottom</text>
      <path d="M809 442v80" stroke="#444" strokeWidth="4" strokeDasharray="5 3 8 2 3 3" />
      <path d="M1003 390v178" stroke="#35b535" strokeWidth="4" /><path d="M828 565l175 3" stroke="#e03030" strokeWidth="3" /><path d="M1003 568l-38 17" stroke="#2020dd" strokeWidth="3" />
      <g fontFamily="Liberation Sans, sans-serif" fontWeight="700" fontSize="30"><text x="990" y="372" fill="#1fa81f">Y</text><text x="789" y="577" fill="#d62222">X</text><text x="958" y="597" fill="#2020dd">Z</text></g>
      <g stroke="#333" strokeWidth="3.500" strokeLinejoin="round"><path d="M1006 662l26-7 26 7-25 9z" fill="#fff" /><path d="M1006 662l27 9v36l-27-11z" fill="#d8d8d8" /><path d="M1058 662l-25 9v36l25-11z" fill="#b5b5b5" /></g>
      <path d="M1084 675h22l-11 12z" fill="#333" />
    </svg>
  );
}

function RightPanel() {
  const cell = "flex h-[33px] items-center justify-center border-b border-[#aaa] last:border-b-0";
  return (
    <div className="absolute right-0 top-[517px] w-[32px] border-y border-l border-[#aaa] bg-white">
      <div className={cell}><svg width="18" height="18" viewBox="0 0 18 18" fill="none" stroke={DARK} strokeWidth="1.300"><rect x=".7" y=".7" width="16.600" height="16.600" rx="2" /><path d="M3 4.500h10M5 7.500h9M6 10.500h9M6 13.500h9M4.500 4v9.500" strokeWidth="1.700" /></svg></div>
      <div className={cell}><svg width="20" height="20" viewBox="0 0 20 20" fill="#fff" stroke={DARK} strokeWidth="1.400"><path d="M5 9l7-4 7 4v6l-7 4-7-4zM5 9l7 4 7-4M12 13v6" /><path d="M1 1h9v7H1zM1 4.500h9M4 1v7M7 1v7" fill="#a9c4ea" stroke={BLUE} strokeWidth="1.300" /></svg></div>
      <div className={cell}><svg width="20" height="20" viewBox="0 0 20 20" fill="#fff" stroke="#777" strokeWidth="1.200"><path d="M1.500 2h5v5h-5z" fill="#ccc" /><path d="M7.500 13h4V8.500l3-1.500 4 1.500V17l-2 2h-7l-2-1.500zM7.500 13l2 1.500h4V9" /><path d="M4 9v2h7" stroke={BLUE} strokeDasharray="2 1" fill="none" /></svg></div>
      <div className={cell}><svg width="20" height="20" viewBox="0 0 20 20" fill="none" stroke={DARK} strokeWidth="1.500"><path d="M14 18.500H1.500v-7H13" /><path d="M11 15V2h7.500v13a3.700 3.700 0 01-7.500 0z" stroke={BLUE} strokeDasharray="2.500 1" /><circle cx="15" cy="15" r="2" fill="#aaa" strokeWidth="1" /></svg></div>
      <div className={cell}><VariableIcon size={22} /></div>
    </div>
  );
}

function Viewport() {
  return (
    <main className="relative min-w-0 flex-1 bg-white">
      <Model />
      <ViewCube />
      <RightPanel />
      <button className="absolute left-0 top-[583px] -ml-px flex h-[34px] w-[33px] items-center justify-center border border-l-0 border-[#aaa] bg-white">
        <svg width="19" height="18" viewBox="0 0 19 18" fill="none" stroke={DARK} strokeWidth="1.200"><path d="M8.500 1.500H18.500M5.500 6.500h13M5.500 11.500h13M5.500 16.500h13" /><path d="M.5 1l2.800 2.500L6 1" strokeWidth="1.500" /><path d="M3.300 5v13" stroke="#999" strokeWidth="2" /></svg>
      </button>
      <div className="absolute bottom-[7px] right-[11px] flex items-end gap-[16px]">
        <svg width="18" height="14" viewBox="0 0 18 14" fill="#ddd" stroke={DARK} strokeWidth="1.200"><path d="M5.500 7V4c0-4 11.500-4 11.500 0v6c0 2-1 3-3 3H1V7.500h6" /><ellipse cx="11.300" cy="4" rx="4.500" ry="2" fill="#fff" /><path d="M4 13v-2M7 13v-2M10 13v-2" /></svg>
        <svg width="21" height="14" viewBox="0 0 21 14" fill="#ccc" stroke={DARK} strokeWidth="1.400"><path d="M1 13v-2a9.500 9.500 0 0119 0v2z" /><path d="M5.500 10a5 4.500 0 0110 0z" fill="#fff" /></svg>
        <svg width="17" height="15" viewBox="0 0 17 15" fill="none" stroke={DARK} strokeWidth="1.200"><path d="M1.500 1.500h13M7 .5v11M9 .5v11M4 1.500L1.500 9.500h5zM12 1.500L9.500 9.500h5z" /><path d="M1 13.500h14" strokeWidth="2" /></svg>
      </div>
    </main>
  );
}

/* ---------- bottom tabs ---------- */
const tabs = ["CAD Imports", "parts", "files", "Assembly 1", "Variable Studio 1"];
function Tabs() {
  return (
    <footer className="flex h-[30px] shrink-0 bg-[#d7d7d7] text-[14px]">
      <div className="flex w-[39px] items-center justify-center pr-[6px]">
        <svg width="16" height="16" viewBox="0 0 16 16" stroke="#666" strokeWidth="2.400"><path d="M8 0v16M0 8h16" /></svg>
      </div>
      <div className="flex gap-[2px]">
        {tabs.map((t) => {
          const active = t === "Assembly 1";
          const variable = t.startsWith("Var");
          return (
            <div key={t} className={"flex w-[200px] items-center whitespace-nowrap " + (active ? "h-[28px] border-b-2 border-[#1651b0] bg-white pl-[10px] text-[#333]" : "h-[27px] rounded-b-[4px] bg-[#e9e9e9] pl-[10px] text-[#777] shadow-[0_1px_2px_#aaa]")}>
              {active ? <AssemblyIcon size={19} /> : variable ? <VariableIcon size={19} /> : <FolderIcon color={DARK} size={19} w={1.400} />}
              <span className={variable ? "ml-[3px] pt-px" : "ml-[4px] pt-px"}>{t}</span>
            </div>
          );
        })}
      </div>
    </footer>
  );
}

export default function App() {
  return (
    <div className="flex h-[1318px] w-[2489px] flex-col overflow-hidden bg-white [font-family:Roboto,sans-serif]">
      <Header />
      <div className="flex min-h-0 flex-1">
        <Rail />
        <div className="flex min-w-0 flex-1 flex-col">
          <Toolbar />
          <div className="flex min-h-0 flex-1">
            <Tree />
            <Viewport />
          </div>
          <Tabs />
        </div>
      </div>
    </div>
  );
}
